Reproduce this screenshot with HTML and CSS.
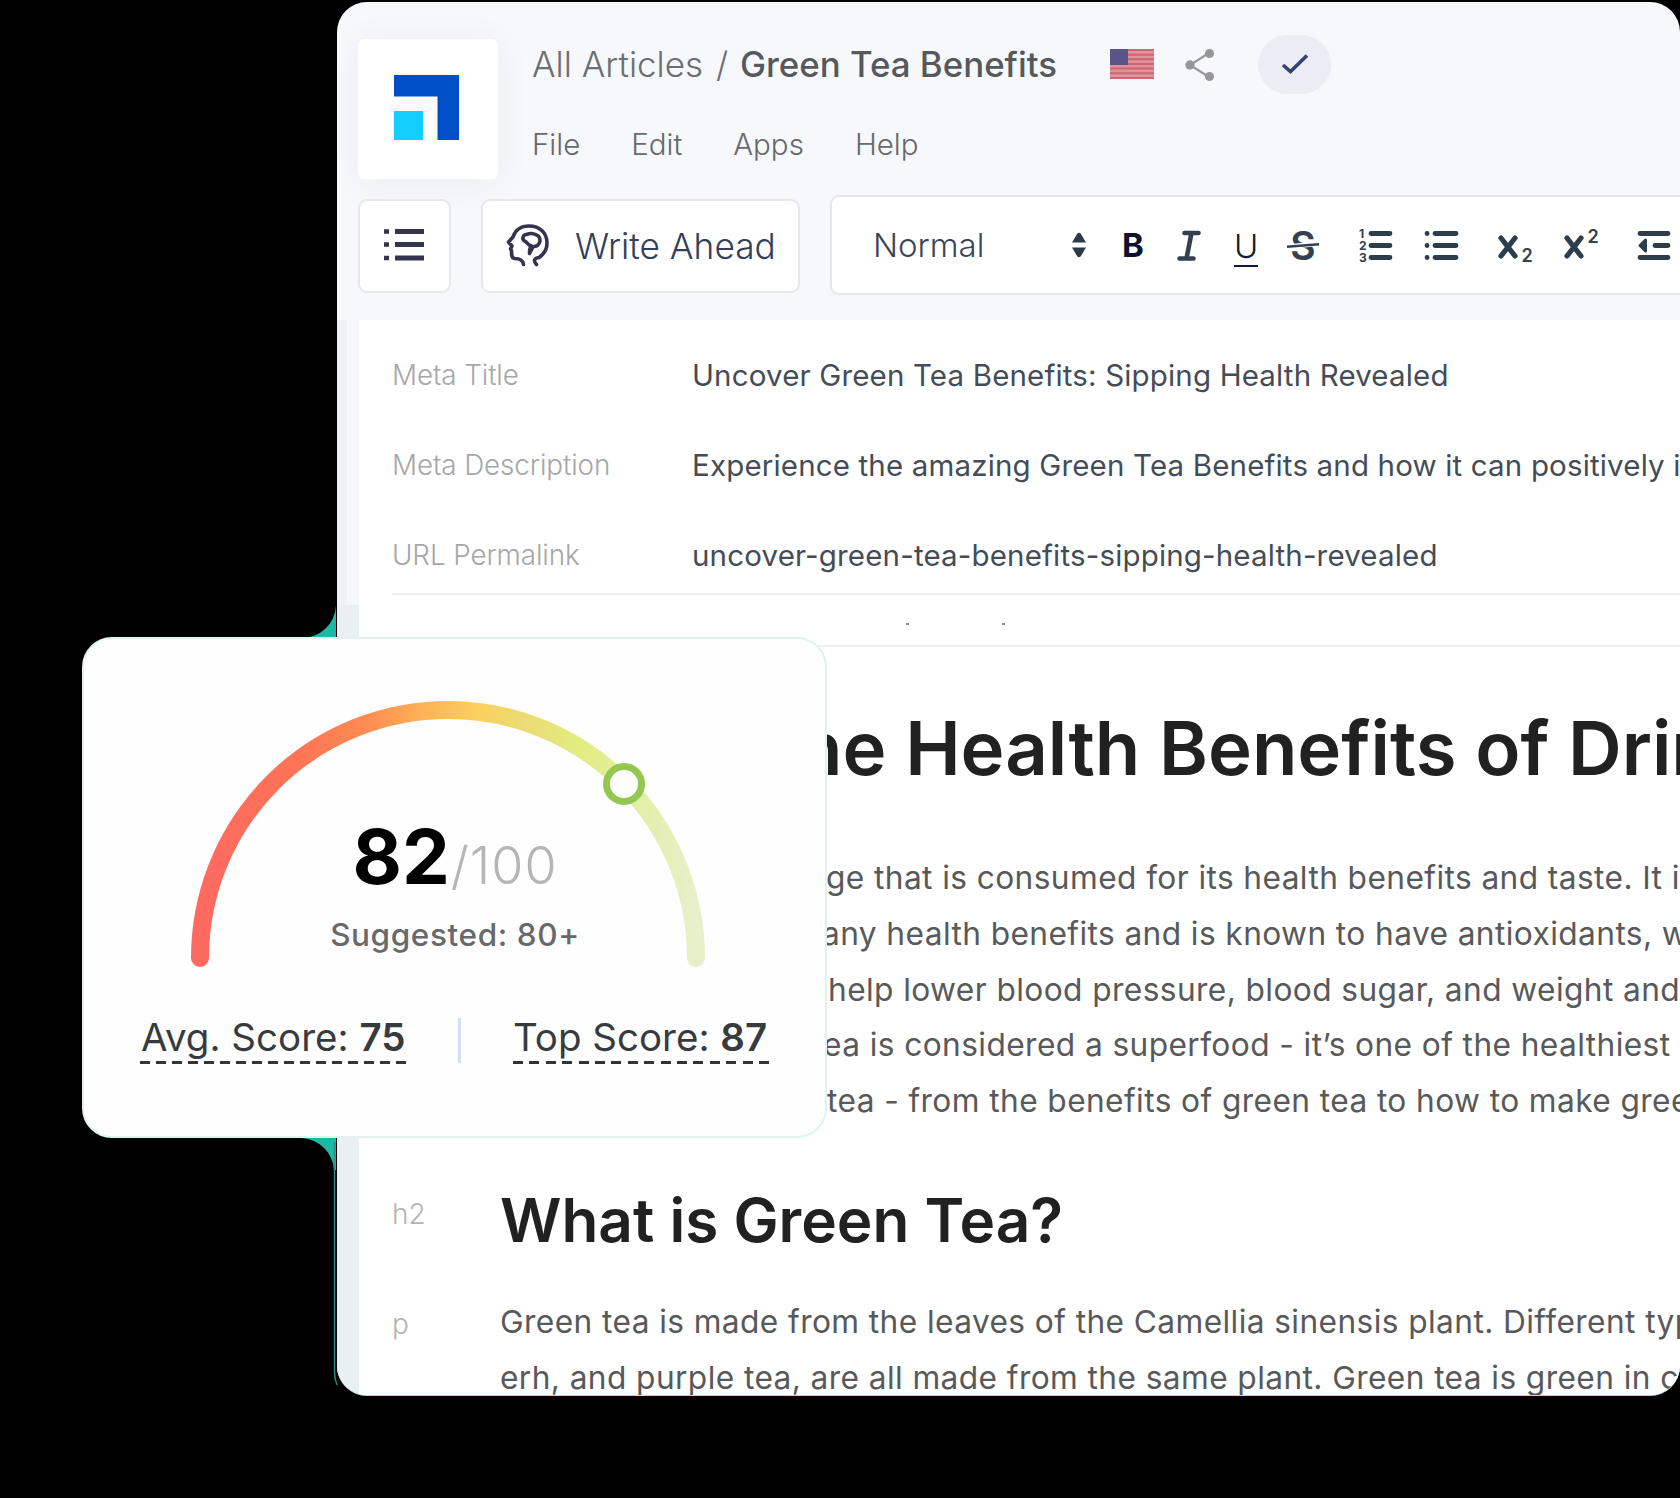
FILE: index.html
```
<!doctype html>
<html lang="en">

<head>
    <title>Green Tea Benefits</title>
    <meta charset="utf-8">
    <link rel="stylesheet" href="styles.css">
</head>

<body>
    <div id="stage">
        <div id="editor">
            <header class="top">
                <div class="logo">
                    <svg width="65" height="65" viewBox="0 0 65 65">
                        <path d="M0 0H65V65H43.500V21.500H0z" fill="#004fc9"/>
                        <path d="M0 36H29V65H0z" fill="#12cfff"/>
                    </svg>
                </div>
                <div class="heading">
                    <div class="crumbs">
                        <span class="crumb">All Articles</span>
                        <span class="slash">/</span>
                        <span class="current">Green Tea Benefits</span>
                        <svg class="flag" width="44" height="30" viewBox="0 0 44 30">
                            <path d="M0 0H44V30H0z" fill="#e0929b"/>
                            <path d="M0 1H44M0 5.700H44M0 10.300H44M0 15H44M0 19.600H44M0 24.200H44M0 29H44" stroke="#cc6672" stroke-width="2"/>
                            <path d="M0 0H18V16H0z" fill="#5b5488"/>
                        </svg>
                        <svg class="share" width="30" height="34" viewBox="0 0 30 34">
                            <path d="M24 6L5 18L24 30" fill="none" stroke="#999" stroke-width="2.200"/>
                            <g fill="#979797"><circle cx="24.500" cy="6.500" r="4.500"/><circle cx="5" cy="18" r="4.700"/><circle cx="24.500" cy="29.500" r="4.500"/></g>
                        </svg>
                        <span class="saved">
                            <svg width="28" height="22" viewBox="0 0 28 22"><path d="M2 12L9.500 18.500L26 2.500" fill="none" stroke="#37436a" stroke-width="3.600"/></svg>
                        </span>
                    </div>
                    <nav class="menu">
                        <span>File</span><span>Edit</span><span>Apps</span><span>Help</span>
                    </nav>
                </div>
            </header>

            <div class="tools">
                <div class="btn outline">
                    <svg width="42" height="34" viewBox="0 0 42 34" stroke="#34344f" stroke-width="5">
                        <path d="M11 2.500H40M11 15.500H40M11 29H40"/>
                        <path d="M0 2.500H5M0 15.500H5M0 29H5" stroke-width="4.600"/>
                    </svg>
                </div>
                <div class="btn ahead">
                    <svg width="44" height="44" viewBox="0 0 44 44" fill="none" stroke="#34344f" stroke-width="3.600" stroke-linecap="round" stroke-linejoin="round">
                        <path d="M17.500 40.500C17 36 14 34.500 8.500 34.500C5.500 34 5.500 31 5.500 26.500L4.500 25L6 22L2.500 18L7 13C9 6 15 2 23 2C34 2 41 9 41 19C41 26 37.500 30.500 33 33.500C28 34.500 27 36.500 30.500 40.500"/>
                        <path d="M23.500 29.500C23 26 24.500 23.500 25 21.500C22 22 21.500 18 18.500 17C15.500 15 17 10.500 20.500 10.500C24 9 28 9.500 30.500 11C34 12 34.500 16 33.500 18.500C32.500 21.500 30 22.500 27.500 22.500C26 24 25 27 23.500 29.500z"/>
                    </svg>
                    <span>Write Ahead</span>
                </div>
                <div class="format">
                    <span class="style">Normal</span>
                    <svg class="sort" width="16" height="26" viewBox="0 0 16 26" fill="#2c3b48">
                        <path d="M1 10.500L6 2Q8 -0.500 10 2L15 10.500z"/><path d="M1 15.500L6 24Q8 26.500 10 24L15 15.500z"/>
                    </svg>
                    <b class="bold">B</b>
                    <svg class="italic" width="24" height="32" viewBox="0 0 24 32" stroke="#33414e" stroke-width="4.600" stroke-linecap="round">
                        <path d="M7.500 4H21.500M2.500 29.500H16.500M14.500 4L9.500 29.500"/>
                    </svg>
                    <span class="under">U</span>
                    <svg class="strike" width="34" height="38" viewBox="0 0 34 38">
                        <text x="17" y="33.500" text-anchor="middle">S</text>
                        <path d="M0 21.300L33 17.300" stroke="#fff" stroke-width="5"/>
                        <path d="M1 20.800L33 18.200" stroke="#33414e" stroke-width="2.600"/>
                    </svg>
                    <svg class="ordered" width="36" height="40" viewBox="0 0 36 40">
                        <path d="M13 8.500H32M13 20.500H32M13 32.500H32"/>
                        <text x="1" y="13">1</text><text x="1" y="25">2</text><text x="1" y="37">3</text>
                    </svg>
                    <svg class="bullets" width="36" height="40" viewBox="0 0 36 40">
                        <path d="M11 8.500H32M11 20.500H32M11 32.500H32"/>
                        <path d="M3 8.500H3.100M3 20.500H3.100M3 32.500H3.100"/>
                    </svg>
                    <svg class="sub" width="36" height="40" viewBox="0 0 36 40">
                        <path d="M3 13L17 31M17 13L3 31"/><text x="23.500" y="37">2</text>
                    </svg>
                    <svg class="sup" width="36" height="40" viewBox="0 0 36 40">
                        <path d="M3 13L17 31M17 13L3 31"/><text x="23.500" y="18">2</text>
                    </svg>
                    <svg class="outdent" width="36" height="40" viewBox="0 0 36 40">
                        <path d="M3 8.500H31M18 20.500H31M3 32.500H31"/><path class="arrow" d="M8.500 15V26L3 20.500z"/>
                    </svg>
                </div>
            </div>

            <main class="page">
                <div class="meta">
                    <div class="row"><label>Meta Title</label><span>Uncover Green Tea Benefits: Sipping Health Revealed</span></div>
                    <div class="row"><label>Meta Description</label><span>Experience the amazing Green Tea Benefits and how it can positively impact</span></div>
                    <div class="row"><label>URL Permalink</label><span>uncover-green-tea-benefits-sipping-health-revealed</span></div>
                </div>
                <div class="cut"><i></i><i></i></div>
                <h1>he Health Benefits of Drinking</h1>
                <div class="intro">
                    <p>ge that is consumed for its health benefits and taste. It is</p>
                    <p>any health benefits and is known to have antioxidants, which</p>
                    <p>help lower blood pressure, blood sugar, and weight and</p>
                    <p>ea is considered a superfood - it’s one of the healthiest</p>
                    <p>tea - from the benefits of green tea to how to make green</p>
                </div>
                <div class="block">
                    <span class="tag">h2</span>
                    <h2>What is Green Tea?</h2>
                </div>
                <div class="block text">
                    <span class="tag">p</span>
                    <div>
                        <p>Green tea is made from the leaves of the Camellia sinensis plant. Different types</p>
                        <p>erh, and purple tea, are all made from the same plant. Green tea is green in color</p>
                    </div>
                </div>
            </main>
        </div>

        <!-- teal shape behind the score card -->
        <svg id="accent" width="34" height="790" viewBox="0 0 34 790">
            <path d="M-4 31A34 34 0 0 0 30 -1V31z" fill="#1fb8a4"/>
            <path d="M-4 531A34 34 0 0 1 28 563H30V531z" fill="#1fb8a4"/>
            <path d="M28.500 535V765Q28.500 772 31 778" fill="none" stroke="#2b8a80" stroke-width="1.500"/>
        </svg>

        <!-- score card -->
        <section id="score">
            <div class="gauge">
                <svg width="520" height="280" viewBox="0 0 520 280" fill="none" stroke-width="18" stroke-linecap="round">
                    <defs>
                        <linearGradient id="heat" gradientUnits="userSpaceOnUse" x1="12" y1="0" x2="508" y2="0">
                            <stop offset="0" stop-color="#ff6a60"/>
                            <stop offset=".2" stop-color="#ff7457"/>
                            <stop offset=".33" stop-color="#ff8a52"/>
                            <stop offset=".45" stop-color="#fdb258"/>
                            <stop offset=".56" stop-color="#fbd05e"/>
                            <stop offset=".68" stop-color="#e8df78"/>
                            <stop offset=".76" stop-color="#e2ec80"/>
                            <stop offset=".86" stop-color="#e2eea0"/>
                            <stop offset="1" stop-color="#e8f0cb"/>
                        </linearGradient>
                    </defs>
                    <path d="M12 260A248 248 0 0 1 508 260" stroke="url(#heat)"/>
                    <circle cx="436" cy="86" r="17.500" fill="#fff" stroke="#93c74f" stroke-width="7"/>
                </svg>
                <div class="value">
                    <div class="num"><b>82</b><span>/100</span></div>
                    <div class="hint">Suggested: 80+</div>
                </div>
            </div>
            <div class="compare">
                <span class="avg">Avg. Score: <b>75</b></span>
                <i class="split"></i>
                <span class="best">Top Score: <b>87</b></span>
            </div>
        </section>
    </div>
</body>

</html>
```
FILE: styles.css
```
*{padding:0;margin:0;box-sizing:border-box;}
body{
background:#000;
font-family:Inter, "Liberation Sans", sans-serif;
overflow:hidden;
}
svg{display:block;flex:none;}
#stage{
position:relative;
width:1680px;
height:1498px;
padding:2px 0 0 337px;
overflow:hidden;
}
#editor{
width:1343px;
height:1394px;
border-radius:30px;
overflow:hidden;
background:#f6f8fc;
border-bottom:1px solid #a9dcd5;
white-space:nowrap;
}

/* header */
.top{
display:flex;
height:193px;
padding-left:21px;
}
.logo{
width:140px;
height:140px;
margin-top:37px;
padding:36px 0 0 35.500px;
border-radius:6px;
background:#fff;
box-shadow:0 4px 36px rgba(60,50,90,.06);
}
.heading{margin-left:34px;padding-top:32px;}
.crumbs{
display:flex;
align-items:center;
height:60px;
font-size:35px;
color:#6b6e72;
}
.crumb{font-weight:300;width:184px;}
.slash{font-weight:300;width:24px;}
.current{
font-size:34.850px;
font-weight:500;
color:#56595c;
width:370px;
}
.share{margin:0 43px 0 31px;}
.saved{
width:73px;
height:59px;
border-radius:30px;
background:#ebecf4;
display:flex;
align-items:center;
justify-content:center;
}
.menu{
display:flex;
gap:51px;
margin-top:30px;
line-height:40px;
font-size:29.500px;
font-weight:300;
color:#66696e;
}

/* toolbar */
.tools{
display:flex;
align-items:center;
height:99px;
padding-left:21px;
}
.btn{
height:94px;
flex:none;
margin-top:2px;
border:2px solid #e6e8ed;
border-radius:9px;
background:#fff;
display:flex;
align-items:center;
}
.outline{width:93px;justify-content:center;}
.ahead{
width:319px;
margin:2px 30px 0;
padding-left:23px;
font-size:35.300px;
font-weight:300;
color:#34405a;
}
.ahead span{margin-left:25px;padding-top:1px;}
.format{
display:flex;
align-items:center;
width:860px;
height:100px;
flex:none;
padding-left:41px;
border:2px solid #e3e7eb;
border-radius:9px;
background:#fff;
font-size:33px;
color:#131a33;
}
.style{
font-weight:300;
color:#3a4656;
width:198px;
}
.bold{margin-left:35px;width:24px;color:#0b1230;}
.italic{margin-left:31px;}
.under{
margin:5px 0 0 33px;
width:24px;
line-height:38px;
text-align:center;
font-weight:300;
border-bottom:2px solid #131a33;
}
.strike{margin-left:28px;}
.format svg{overflow:visible;}
.format .strike text{font:600 39px Inter, sans-serif;}
.ordered,.bullets,.sub,.sup,.outdent{
stroke:#2e3d4a;
stroke-width:4.800;
stroke-linecap:round;
fill:none;
}
.format svg text{stroke:none;fill:#33414e;}
.ordered text{font:700 12px Inter, sans-serif;}
.sub text,.sup text{font:600 18px Inter, sans-serif;}
.ordered{margin-left:38px;}
.bullets{margin-left:30px;}
.sub{margin-left:38px;}
.sup{margin-left:30px;}
.outdent{margin-left:37px;}
.outdent .arrow{fill:#2e3d4a;stroke-width:3;stroke-linejoin:round;}
.sub,.sup{stroke-width:5.200;}

/* article */
.page{
height:1077px;
margin-top:26px;
padding-left:22px;
background:linear-gradient(90deg,#eef2f6 0 10px,#f6f7fb 10px 22px,#fff 22px) 0 0/100% 285px no-repeat,
linear-gradient(90deg,#ebeff4 0 17px,#e9f0f1 17px 22px,#fff 22px);
}
.meta{
margin-left:33px;
padding:33px 0 17px;
border-bottom:2px solid #eff0f2;
}
.row{
display:flex;
line-height:42px;
margin-bottom:47px;
}
.row:last-child{margin-bottom:0;}
.row label{
width:300px;
flex:none;
padding-top:1px;
font-size:27.800px;
font-weight:300;
letter-spacing:-.1px;
color:#a6a7a9;
}
.row span{
padding-top:1px;
font-size:29.500px;
letter-spacing:.160px;
color:#434c57;
}
.cut{
display:flex;
gap:93px;
height:52px;
padding:28px 0 0 547px;
border-bottom:2px solid #eff0f2;
}
.cut i{width:3px;height:2px;background:#8a8a8a;}
h1{
margin:56px 0 0 438px;
line-height:90px;
font-size:74.300px;
font-weight:600;
color:#212121;
}
.intro{margin:57px 0 0 467px;}
.intro p:nth-child(2){margin-left:-4px;}
.intro p:nth-child(3){margin-left:2px;}
.intro p:nth-child(4){margin-left:-3px;}
.intro p:nth-child(5){margin-left:1px;}
p{
line-height:55.750px;
font-size:31.700px;
letter-spacing:.400px;
color:#58595b;
}
.block{display:flex;margin-left:33px;}
.intro + .block{margin-top:55px;}
.tag{
width:108px;
flex:none;
font-size:28px;
font-weight:300;
color:#b4b4b4;
line-height:60px;
}
h2{
line-height:74px;
font-size:60.250px;
font-weight:600;
color:#212121;
}
.text{margin-top:36px;}

/* lies over the editor and the dark background */
#accent{position:absolute;left:306px;top:607px;overflow:visible;}
#score{
position:absolute;
left:82px;
top:637px;
width:745px;
height:501px;
border:2px solid #dff4f0;
border-radius:30px;
background:#fefefe;
}
.gauge{
display:grid;
width:520px;
margin:59px 0 0 104px;
}
.gauge > *{grid-area:1/1;}
.value{
padding-top:116px;
margin-left:14px;
text-align:center;
}
.num{
line-height:84px;
font-size:76px;
color:#000;
}
.num b{font-weight:650;}
.num span{
margin-left:1px;
font-size:52px;
font-weight:300;
letter-spacing:1px;
color:#b5b5b5;
}
.hint{
margin-top:7px;
line-height:40px;
font-size:31.500px;
font-weight:500;
letter-spacing:.6px;
color:#68696b;
}
.compare{
display:flex;
align-items:center;
margin:36px 0 0 56px;
font-size:38.500px;
color:#383b3e;
white-space:nowrap;
}
.compare b{font-weight:600;}
.avg,.best{
line-height:46px;
height:50px;
background:repeating-linear-gradient(90deg,#333 0 10px,transparent 10px 16px) 0 100%/100% 3px no-repeat;
}
.avg{width:267px;padding-left:1px;}
.best{
width:256px;
background-image:repeating-linear-gradient(90deg,#333 0 10px,transparent 10px 16.400px);
}
.split{width:3px;height:45px;margin:2px 52px 0 51px;background:#cfe1f3;}
```
